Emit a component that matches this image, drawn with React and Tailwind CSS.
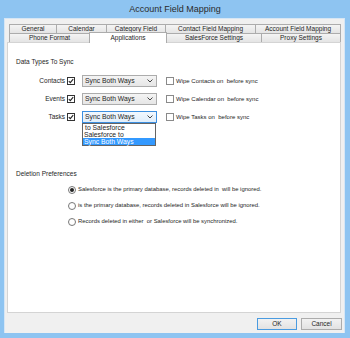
import React from "react";

const rowOne = [
    { label: "General", w: "w-[48px]" },
    { label: "Calendar", w: "w-[51px]" },
    { label: "Category Field", w: "w-[60px]" },
    { label: "Contact Field Mapping", w: "w-[91px]" },
    { label: "Account Field Mapping", w: "w-[86px]" },
];

const rowTwo = [
    { label: "Phone Format", w: "w-[81px]" },
    { label: "Applications", w: "w-[78px]", active: true },
    { label: "SalesForce Settings", w: "w-[96px]" },
    { label: "Proxy Settings", w: "w-[80px]" },
];

const syncRows = [
    { label: "Contacts", wipe: "Wipe Contacts on  before sync" },
    { label: "Events", wipe: "Wipe Calendar on  before sync" },
    { label: "Tasks", wipe: "Wipe Tasks on  before sync", open: true },
];

const deletion = [
    { text: "Salesforce is the primary database, records deleted in  will be ignored.", on: true },
    { text: "is the primary database, records deleted in Salesforce will be ignored." },
    { text: "Records deleted in either  or Salesforce will be synchronized." },
];

function Tab({ label, w, active }) {
    if (active) {
        return (
            <div className={`${w} -ml-px -mt-[1px] h-[11px] relative z-10 bg-white border-t border-l border-r border-[#acacac] flex items-center justify-center`}>
                {label}
            </div>
        );
    }
    return (
        <div className={`${w} -ml-px first:ml-0 h-[10px] bg-gradient-to-b from-[#f4f4f4] to-[#e4e4e4] border border-[#acacac] flex items-center justify-center`}>
            {label}
        </div>
    );
}

function Check({ checked }) {
    return (
        <div className={`w-[8px] h-[8px] bg-white border flex items-center justify-center ${checked ? "border-[#333333]" : "border-[#8a8a8a]"}`}>
            {checked && (
                <svg width="6" height="6" viewBox="0 0 6 6">
                    <path d="M0.8 3.1 L2.3 4.6 L5.2 1.2" fill="none" stroke="#222" strokeWidth="1.1" />
                </svg>
            )}
        </div>
    );
}

export default function App() {
    return (
        <div className="w-[350px] h-[338px] bg-[#8ec4f1] flex flex-col font-['Liberation_Sans',Arial,sans-serif] text-[#1e1e1e]">
            <div className="h-[18px] flex items-center justify-center text-[9px] text-[#2b2b2b] pt-[1px]">
                Account Field Mapping
            </div>

            <div className="flex-1 ml-[4px] mr-[5px] mb-[5px] bg-[#f0f0f0] border-l border-r border-t border-[#d6e6f5] pl-[2px] pr-[3px] pt-[5px] flex flex-col text-[6.5px] leading-none">
                <div className="pl-[2px]">
                    <div className="flex">
                        {rowOne.map((t) => <Tab key={t.label} {...t} />)}
                    </div>
                    <div className="flex -mt-px">
                        {rowTwo.map((t) => <Tab key={t.label} {...t} />)}
                    </div>
                </div>

                <div className="h-[271px] -mt-px bg-white border border-[#d4d4d4] pl-[8px] pt-[15px]">
                    <div className="h-[8px] flex items-center">Data Types To Sync</div>

                    <div className="mt-[9px] flex flex-col gap-[6px]">
                        {syncRows.map((r) => (
                            <div key={r.label} className="h-[12px] flex items-center">
                                <div className="w-[49px] text-right">{r.label}</div>
                                <div className="ml-[2px]"><Check checked /></div>
                                <div className="ml-[7px] relative">
                                    <div className={`w-[75px] h-[12px] border flex items-center justify-between pl-[2px] pr-[3px] text-[6.8px] ${r.open ? "border-[#3c8fe0] bg-gradient-to-b from-[#f2f8fe] to-[#e0eefb]" : "border-[#acacac] bg-gradient-to-b from-[#f4f4f4] to-[#e6e6e6]"}`}>
                                        <span>Sync Both Ways</span>
                                        <svg width="6" height="4" viewBox="0 0 6 4">
                                            <path d="M0.5 0.5 L3 3 L5.5 0.5" fill="none" stroke="#444" strokeWidth="1" />
                                        </svg>
                                    </div>
                                    {r.open && (
                                        <div className="absolute left-0 top-full w-[74px] bg-white border border-[#646464] text-[6.8px] z-20">
                                            <div className="h-[7px] leading-[7px] pl-[2px]">to Salesforce</div>
                                            <div className="h-[7px] leading-[7px] pl-[1px]">Salesforce to</div>
                                            <div className="h-[7px] leading-[7px] pl-[1px] bg-[#3399ff] text-white">Sync Both Ways</div>
                                        </div>
                                    )}
                                </div>
                                <div className="ml-[9px]"><Check /></div>
                                <div className="ml-[2px] text-[6px] whitespace-pre">{r.wipe}</div>
                            </div>
                        ))}
                    </div>

                    <div className="mt-[47px] h-[8px] flex items-center">Deletion Preferences</div>

                    <div className="mt-[8px] flex flex-col gap-[8px] pl-[52px]">
                        {deletion.map((d) => (
                            <div key={d.text} className="h-[8px] flex items-center gap-[2px]">
                                <div className="w-[8px] h-[8px] rounded-full border border-[#777777] bg-white flex items-center justify-center">
                                    {d.on && <div className="w-[4px] h-[4px] rounded-full bg-[#222222]" />}
                                </div>
                                <span className="text-[5.9px] whitespace-pre">{d.text}</span>
                            </div>
                        ))}
                    </div>
                </div>

                <div className="mt-[5px] -mr-px flex justify-end gap-[4px]">
                    <button className="w-[40px] h-[12px] border border-[#4a9be0] bg-gradient-to-b from-[#f2f2f2] to-[#e2e2e2] text-[6.5px] leading-none">OK</button>
                    <button className="w-[41px] h-[12px] border border-[#acacac] bg-gradient-to-b from-[#f2f2f2] to-[#e2e2e2] text-[6.5px] leading-none">Cancel</button>
                </div>
            </div>
        </div>
    );
}
